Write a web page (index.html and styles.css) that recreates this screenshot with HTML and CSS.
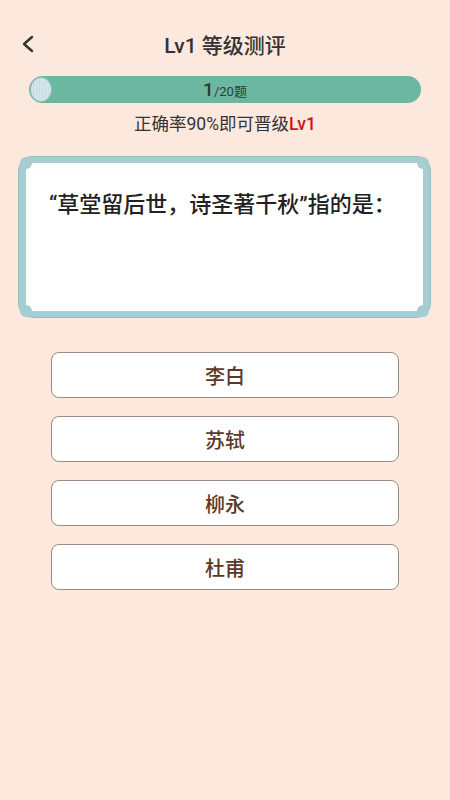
FILE: index.html
```html
<!DOCTYPE html>
<html lang="zh-CN">
<head>
<meta charset="utf-8">
<title>Lv1 等级测评</title>
<link rel="stylesheet" href="styles.css">
</head>
<body>
<div class="page">
  <header class="topbar">
    <button class="back" aria-label="返回">
      <svg width="16" height="18" viewBox="0 0 16 18"><polyline points="12,2 4,9 12,16" fill="none" stroke="#333" stroke-width="2.4" stroke-linecap="round" stroke-linejoin="round"/></svg>
    </button>
    <h1 class="title">Lv1 等级测评</h1>
    <span class="spacer"></span>
  </header>

  <div class="progress">
    <span class="knob"></span>
    <span class="count"><b>1</b>/20题</span>
  </div>
  <p class="hint">正确率90%即可晋级<span class="lv">Lv1</span></p>

  <section class="card">
    <div class="card-inner">
      <p class="question">“草堂留后世，诗圣著千秋”指的是：</p>
    </div>
  </section>

  <ul class="options">
    <li class="option">李白</li>
    <li class="option">苏轼</li>
    <li class="option">柳永</li>
    <li class="option">杜甫</li>
  </ul>
</div>
</body>
</html>
```

FILE: styles.css
```css
* { box-sizing: border-box; }
html, body { margin: 0; padding: 0; }
body {
  background: #fde8de;
  font-family: "Roboto", "Noto Sans CJK SC", sans-serif;
  color: #2b2b2b;
  width: 450px;
  min-height: 800px;
}
.page { display: flex; flex-direction: column; padding-top: 26px; }

.topbar {
  height: 36px;
  display: grid;
  grid-template-columns: 56px 1fr 56px;
  align-items: center;
}
.back {
  background: none; border: 0; padding: 0 0 0 20px; margin: 0;
  display: flex; align-items: center; height: 36px;
}
.title {
  margin: 0; text-align: center;
  font-size: 21px; font-weight: 500; color: #333;
}

.progress {
  margin: 14px 29px 0 29px;
  height: 27px;
  border-radius: 14px;
  background: #6cb7a0;
  display: flex; align-items: center;
  padding: 0 1px;
}
.knob {
  width: 22px; height: 25px; border-radius: 50%;
  background: repeating-linear-gradient(90deg, #d3e6e7 0 2px, #c7dfe1 2px 3px);
  border: 1px solid #96bcbd;
  flex: none;
}
.count {
  flex: 1; text-align: center; margin-right: 22px;
  font-size: 13px; color: #2f3b36;
}
.count b { font-size: 19px; font-weight: 500; }

.hint {
  margin: 11px 0 0; text-align: center;
  font-size: 17.5px; line-height: 20px; color: #333; font-weight: 400;
}
.lv { color: #c8161d; font-weight: 500; }

.card {
  margin: 23px 20px 0 19px;
  height: 160px;
  background: #a6cdd1;
  border-radius: 14px;
  padding: 6px 7px;
  box-shadow: 0 0 0 1px #95bfc3;
  position: relative;
}
.card-inner {
  height: 100%;
  background: #fff;
  border-radius: 3px;
  position: relative;
  padding: 27px 0 0 23px;
}
.card::before, .card::after, .card-inner::before, .card-inner::after {
  content: "";
  position: absolute;
  z-index: 2;
  width: 12px; height: 12px; border-radius: 50%;
  background: #a6cdd1;
}
.card-inner::before { left: -6px; top: -6px; }
.card-inner::after { right: -6px; top: -6px; }
.card::before { left: 1px; bottom: 0; }
.card::after { right: 1px; bottom: 0; }
.question {
  margin: 0;
  font-size: 22px; line-height: 30px; font-weight: 500; color: #222;
}

.options {
  list-style: none; margin: 35px 0 0 51px; padding: 0;
  width: 348px;
  display: flex; flex-direction: column; gap: 18px;
}
.option {
  height: 46px;
  border: 1.5px solid #9a8b84;
  border-radius: 8px;
  background: #fff;
  display: flex; align-items: center; justify-content: center;
  font-size: 20px; font-weight: 500; color: #5b3928;
}
```
